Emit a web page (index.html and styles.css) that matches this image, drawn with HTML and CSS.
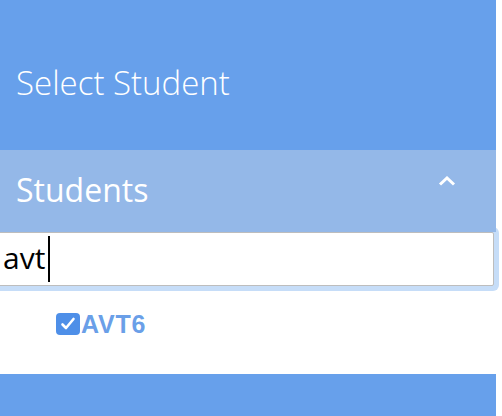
FILE: index.html
```html
<!DOCTYPE html>
<html>
<head>
<meta charset="utf-8">
<link rel="stylesheet" href="styles.css">
</head>
<body>
<div class="panel">
  <div class="header">
    <h1 class="title">Select Student</h1>
  </div>
  <div class="section">
    <span class="section-title">Students</span>
    <svg class="chevron" width="18" height="10" viewBox="0 0 18 10"><path d="M2 8.5 L9 2 L16 8.5" fill="none" stroke="#fff" stroke-width="3"/></svg>
  </div>
  <div class="search">
    <div class="input"><span class="value">avt</span><span class="caret"></span></div>
  </div>
  <div class="results">
    <label class="option">
      <span class="check"><svg width="16" height="14" viewBox="0 0 16 14"><path d="M2.5 7.5 L6 11 L13.5 2" fill="none" stroke="#fff" stroke-width="2.6" stroke-linecap="round" stroke-linejoin="round"/></svg></span>
      <span class="option-text">AVT6</span>
    </label>
  </div>
  <div class="footer"></div>
</div>
</body>
</html>
```
FILE: styles.css
```css
html, body {
  margin: 0;
  padding: 0;
  background: #fff;
}
body {
  width: 502px;
  height: 416px;
  overflow: hidden;
  font-family: "Open Sans", sans-serif;
}
.panel {
  width: 496px;
  display: flex;
  flex-direction: column;
}
.header {
  height: 150px;
  background: #67a0eb;
  padding: 66px 0 0 16px;
  box-sizing: border-box;
}
.title {
  margin: 0;
  font-size: 33px;
  line-height: 1;
  font-weight: 300;
  color: #fff;
}
.section {
  position: relative;
  z-index: 1;
  height: 82px;
  background: #94b8e8;
  display: flex;
  align-items: flex-start;
  justify-content: space-between;
  padding: 24px 40px 0 16px;
  box-sizing: border-box;
}
.section-title {
  font-size: 32px;
  line-height: 1;
  font-weight: 500;
  color: #fff;
}
.chevron {
  margin-top: 2px;
}
.search {
  height: 59px;
}
.input {
  margin-left: -4px;
  width: 498px;
  height: 54px;
  box-sizing: border-box;
  border: 1px solid #bdbdbd;
  background: #fff;
  box-shadow: 0 0 0 5px #c6ddf8;
  border-radius: 2px;
  display: flex;
  align-items: center;
  padding: 0 0 0 6px;
  font-size: 30px;
  color: #000;
}
.value {
  margin-bottom: 4px;
}
.caret {
  display: inline-block;
  width: 2px;
  height: 46px;
  background: #000;
  margin-left: 3px;
}
.results {
  height: 83px;
  padding: 22px 0 0 56px;
  box-sizing: border-box;
}
.option {
  display: flex;
  align-items: center;
}
.check {
  flex: none;
  width: 24px;
  height: 22px;
  border-radius: 4px;
  background: #4e8fe8;
  display: flex;
  align-items: center;
  justify-content: center;
}
.option-text {
  font-family: "Liberation Sans", Arial, sans-serif;
  font-weight: 700;
  font-size: 25px;
  line-height: 22px;
  letter-spacing: 0.8px;
  color: #6a9fe8;
  margin-left: 1px;
}
.footer {
  height: 42px;
  background: #67a0eb;
}
```
